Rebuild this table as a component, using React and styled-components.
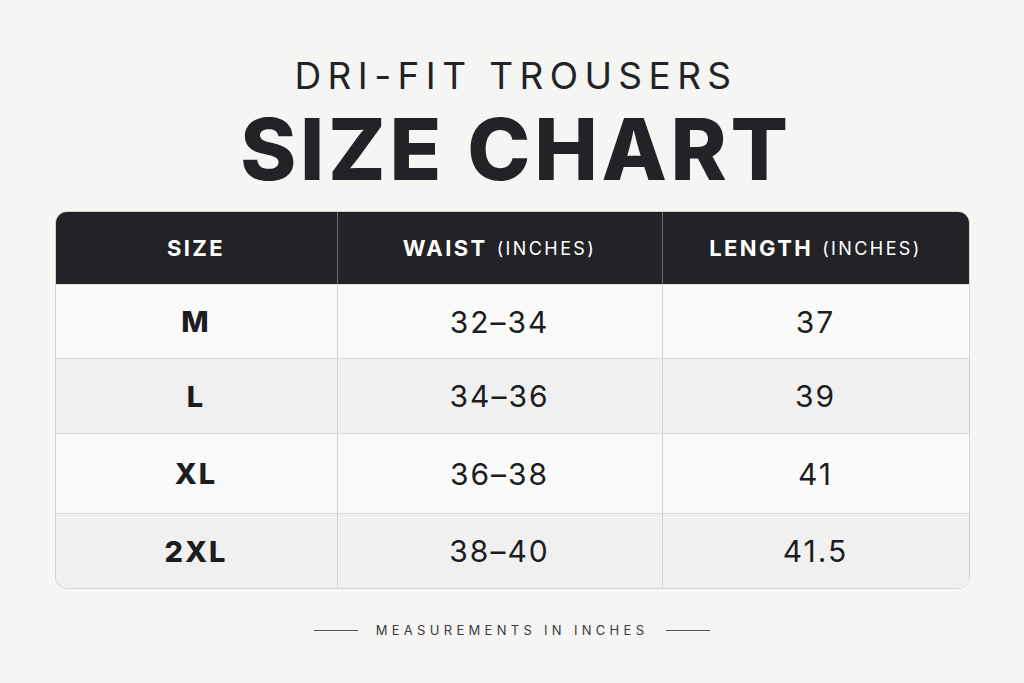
import styled, { createGlobalStyle } from "styled-components";

const GlobalStyle = createGlobalStyle`
  html, body {
    margin: 0;
    padding: 0;
    background: #f5f5f3;
  }
  body {
    font-family: "Inter", "Lato", sans-serif;
    color: #222326;
  }
`;

const Page = styled.div`
  width: 1024px;
  height: 683px;
  display: flex;
  flex-direction: column;
  align-items: center;
  box-sizing: border-box;
  padding-top: 53px;
`;

const Subtitle = styled.div`
  padding-left: 8px;
  font-size: 37px;
  font-weight: 400;
  letter-spacing: 6.4px;
  line-height: 45px;
  color: #222326;
`;

const Title = styled.h1`
  margin: 0;
  padding-left: 8px;
  font-size: 85px;
  font-weight: 800;
  letter-spacing: 3.7px;
  line-height: 103px;
  color: #222326;
`;

const Table = styled.div`
  margin-top: 10px;
  width: 913px;
  border: 1px solid #d4d4d4;
  border-radius: 12px;
  overflow: hidden;
  display: grid;
  grid-template-columns: 281px 325px 1fr;
`;

const HeadCell = styled.div`
  height: 72px;
  background: #222326;
  color: #ffffff;
  display: flex;
  align-items: center;
  justify-content: center;
  font-size: 22px;
  font-weight: 700;
  letter-spacing: 2.4px;
  border-left: ${(p) => (p.first ? "none" : "1px solid #6a6a6a")};
`;

const Unit = styled.span`
  font-size: 18px;
  font-weight: 400;
  letter-spacing: 2.4px;
  margin-left: 9px;
`;

const Cell = styled.div`
  box-sizing: border-box;
  height: ${(p) => p.h}px;
  background: ${(p) => (p.alt ? "#f0f0f0" : "#fafafa")};
  display: flex;
  align-items: center;
  justify-content: center;
  font-size: ${(p) => (p.bold ? "29px" : "30px")};
  font-weight: ${(p) => (p.bold ? 800 : 400)};
  letter-spacing: 2px;
  color: #1c1d20;
  border-top: 1px solid #dcdcdc;
  border-left: ${(p) => (p.first ? "none" : "1px solid #d0d0d0")};
`;

const Footer = styled.div`
  margin-top: 33px;
  display: flex;
  align-items: center;
  gap: 18px;
`;

const Rule = styled.div`
  width: 44px;
  height: 1px;
  background: #55565a;
`;

const FooterText = styled.div`
  font-size: 13px;
  letter-spacing: 4.3px;
  color: #3a3b3f;
`;

const rows = [
  { size: "M", waist: "32–34", length: "37", h: 74 },
  { size: "L", waist: "34–36", length: "39", h: 75 },
  { size: "XL", waist: "36–38", length: "41", h: 80 },
  { size: "2XL", waist: "38–40", length: "41.5", h: 75 },
];

export default function App() {
  return (
    <>
      <GlobalStyle />
      <Page>
        <Subtitle>DRI-FIT TROUSERS</Subtitle>
        <Title>SIZE CHART</Title>
        <Table>
          <HeadCell first>SIZE</HeadCell>
          <HeadCell>
            WAIST<Unit>(INCHES)</Unit>
          </HeadCell>
          <HeadCell>
            LENGTH<Unit>(INCHES)</Unit>
          </HeadCell>
          {rows.map((r, i) => (
            <>
              <Cell key={r.size + "s"} first bold alt={i % 2 === 1} h={r.h}>
                {r.size}
              </Cell>
              <Cell key={r.size + "w"} alt={i % 2 === 1} h={r.h}>
                {r.waist}
              </Cell>
              <Cell key={r.size + "l"} alt={i % 2 === 1} h={r.h}>
                {r.length}
              </Cell>
            </>
          ))}
        </Table>
        <Footer>
          <Rule />
          <FooterText>MEASUREMENTS IN INCHES</FooterText>
          <Rule />
        </Footer>
      </Page>
    </>
  );
}
